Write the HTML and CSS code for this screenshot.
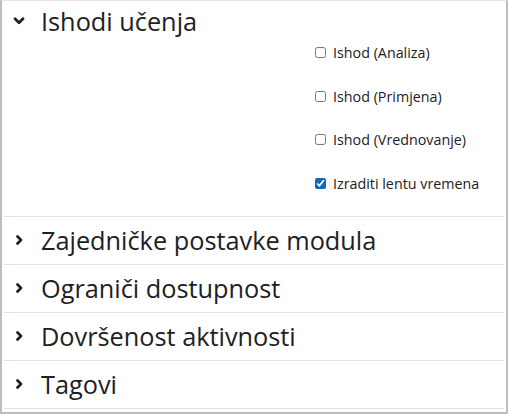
FILE: index.html
```html
<!DOCTYPE html>
<html lang="hr">
<head>
<meta charset="utf-8">
<link rel="stylesheet" href="styles.css">
</head>
<body>
<div class="frame">
  <section class="sec open">
    <div class="head">
      <svg class="chev" width="12" height="12" viewBox="0 0 12 12"><polyline points="2,3.8 6,7.8 10,3.8" fill="none" stroke="#1d2125" stroke-width="2.8" stroke-linecap="round" stroke-linejoin="round"/></svg>
      <span class="title">Ishodi učenja</span>
    </div>
    <ul class="checks">
      <li><label><input type="checkbox"> <span>Ishod (Analiza)</span></label></li>
      <li><label><input type="checkbox"> <span>Ishod (Primjena)</span></label></li>
      <li><label><input type="checkbox"> <span>Ishod (Vrednovanje)</span></label></li>
      <li><label><input type="checkbox" checked> <span>Izraditi lentu vremena</span></label></li>
    </ul>
  </section>
  <section class="sec row">
    <div class="head">
      <svg class="chev" width="12" height="12" viewBox="0 0 12 12"><polyline points="4.5,2.5 8,6 4.5,9.5" fill="none" stroke="#1d2125" stroke-width="2.8" stroke-linecap="round" stroke-linejoin="round"/></svg>
      <span class="title">Zajedničke postavke modula</span>
    </div>
  </section>
  <section class="sec row">
    <div class="head">
      <svg class="chev" width="12" height="12" viewBox="0 0 12 12"><polyline points="4.5,2.5 8,6 4.5,9.5" fill="none" stroke="#1d2125" stroke-width="2.8" stroke-linecap="round" stroke-linejoin="round"/></svg>
      <span class="title">Ograniči dostupnost</span>
    </div>
  </section>
  <section class="sec row">
    <div class="head">
      <svg class="chev" width="12" height="12" viewBox="0 0 12 12"><polyline points="4.5,2.5 8,6 4.5,9.5" fill="none" stroke="#1d2125" stroke-width="2.8" stroke-linecap="round" stroke-linejoin="round"/></svg>
      <span class="title">Dovršenost aktivnosti</span>
    </div>
  </section>
  <section class="sec row last">
    <div class="head">
      <svg class="chev" width="12" height="12" viewBox="0 0 12 12"><polyline points="4.5,2.5 8,6 4.5,9.5" fill="none" stroke="#1d2125" stroke-width="2.8" stroke-linecap="round" stroke-linejoin="round"/></svg>
      <span class="title">Tagovi</span>
    </div>
  </section>
</div>
</body>
</html>
```
FILE: styles.css
```css
html, body {
  margin: 0;
  padding: 0;
  background: #fff;
}
body {
  font-family: "Open Sans", "Noto Sans", sans-serif;
  color: #1d2125;
}
.frame {
  box-sizing: border-box;
  width: 508px;
  height: 414px;
  border-top: 1px solid #e3e3e3;
  border-left: 2px solid #bdbdbd;
  border-right: 2px solid #bdbdbd;
  border-bottom: 2px solid #bdbdbd;
  padding: 0 2px;
  overflow: hidden;
}
.sec.open {
  height: 215px;
}
.sec.row {
  height: 47px;
  border-top: 1px solid #dee2e6;
}
.sec.last {
  border-bottom: 1px solid #dee2e6;
}
.head {
  box-sizing: border-box;
  display: flex;
  align-items: center;
  gap: 16px;
  padding-left: 9px;
}
.open .head {
  height: 41px;
  padding-bottom: 1px;
  margin-bottom: -11px;
}
.row .head {
  height: 47px;
  padding-bottom: 2px;
}
.chev {
  flex: none;
}
.title {
  font-size: 25.3px;
  line-height: 34px;
}
.checks {
  list-style: none;
  margin: 0;
  padding: 0 0 0 311px;
}
.checks li {
  height: 43.6px;
  display: flex;
  align-items: center;
}
.checks label {
  display: flex;
  align-items: center;
  font-size: 14.3px;
  color: #1d2125;
}
.checks input {
  width: 11px;
  height: 11px;
  margin: 0 7px 0 0;
  accent-color: #0f6cbf;
}
```
